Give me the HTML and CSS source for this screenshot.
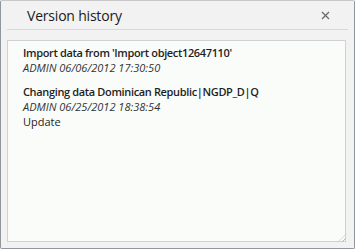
FILE: index.html
```html
<!DOCTYPE html>
<html>
  <head>
    <title>Version history</title>
    <link rel="stylesheet" href="styles.css">
  </head>
  <body>
    <div class="window">
      <div class="window-header">
        <span class="window-title">Version history</span>
        <span class="close-button">
          <svg width="9" height="9" viewBox="0 0 9 9">
            <path d="M1 1 L8 8 M8 1 L1 8" stroke="#6b6b6b" stroke-width="1.3" fill="none" />
          </svg>
        </span>
      </div>
      <div class="history-list">
        <div class="history-item">
          <div class="item-title">Import data from 'Import object12647110'</div>
          <div class="item-meta">ADMIN 06/06/2012 17:30:50</div>
        </div>
        <div class="history-item">
          <div class="item-title">Changing data Dominican Republic|NGDP_D|Q</div>
          <div class="item-meta">ADMIN 06/25/2012 18:38:54</div>
          <div class="item-note">Update</div>
        </div>
        <div class="resize-grip"></div>
      </div>
    </div>
  </body>
</html>
```

FILE: styles.css
```css
body {
  margin: 0;
  padding: 0;
  background-color: #ffffff;
  font-family: "Open Sans", "Noto Sans", sans-serif;
}

.window {
  box-sizing: border-box;
  width: 355px;
  height: 249px;
  display: flex;
  flex-direction: column;
  background-color: #f2f2f2;
  border: 1px solid #8f969c;
  border-top-color: #c8c8c8;
  border-radius: 2px;
}

.window-header {
  display: flex;
  align-items: center;
  justify-content: space-between;
  height: 28px;
  margin: 0 6px;
  padding: 0 18px 0 20px;
  border-bottom: 1px solid #d8d8d8;
}

.window-title {
  font-size: 14px;
  letter-spacing: -0.2px;
  color: #1a1a1a;
}

.close-button {
  display: flex;
}

.history-list {
  position: relative;
  flex: 1;
  margin: 10px 8px 6px 6px;
  padding: 4px 15px;
  background-color: #fafcfa;
  border: 1px solid #cfd1d3;
}

.history-item {
  margin-bottom: 9px;
  font-size: 11px;
  line-height: 15px;
  color: #1e1e1e;
}

.item-title {
  font-weight: 600;
  letter-spacing: -0.35px;
}

.item-meta {
  font-style: italic;
  color: #333333;
}

.resize-grip {
  position: absolute;
  right: -1px;
  bottom: -1px;
  width: 8px;
  height: 8px;
  background: repeating-linear-gradient(135deg, transparent 0 2px, #b9bcbf 2px 3px);
  clip-path: polygon(100% 0, 100% 100%, 0 100%);
}
```
